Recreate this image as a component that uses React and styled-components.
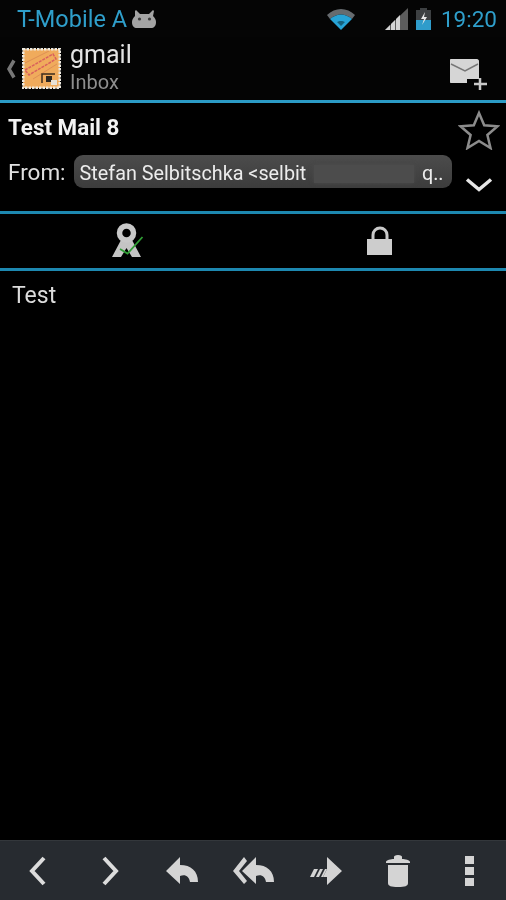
import styled, { createGlobalStyle } from "styled-components";

const GlobalStyle = createGlobalStyle`
  html, body {
    margin: 0;
    padding: 0;
    background: #000;
  }
  * {
    box-sizing: border-box;
  }
`;

function App() {
  return (
    <>
      <GlobalStyle />
      <Screen>
        <StatusBar>
          <Carrier>T-Mobile A</Carrier>
          <AndroidIcon />
          <StatusRight>
            <WifiIcon />
            <SignalIcon />
            <BatteryIcon />
            <Clock>19:20</Clock>
          </StatusRight>
        </StatusBar>

        <ActionBar>
          <BackIcon />
          <StampIcon />
          <TitleBlock>
            <AccountName>gmail</AccountName>
            <FolderName>Inbox</FolderName>
          </TitleBlock>
          <ComposeIcon />
        </ActionBar>
        <Divider />

        <HeaderBlock>
          <HeaderText>
            <Subject>Test Mail 8</Subject>
            <FromRow>
              <FromLabel>From:</FromLabel>
              <Chip>
                <span>Stefan Selbitschka &lt;selbit</span>
                <Smudge />
                <span>q..</span>
              </Chip>
            </FromRow>
          </HeaderText>
          <HeaderActions>
            <StarIcon />
            <ChevronIcon />
          </HeaderActions>
        </HeaderBlock>
        <Divider $dim />

        <SecurityRow>
          <SecurityCell>
            <CertIcon />
          </SecurityCell>
          <SecurityCell>
            <LockIcon />
          </SecurityCell>
        </SecurityRow>
        <Divider $dim />

        <Body>Test</Body>

        <BottomBar>
          <ToolCell>
            <PrevIcon />
          </ToolCell>
          <ToolCell>
            <NextIcon />
          </ToolCell>
          <ToolCell>
            <ReplyIcon />
          </ToolCell>
          <ToolCell>
            <ReplyAllIcon />
          </ToolCell>
          <ToolCell>
            <ForwardIcon />
          </ToolCell>
          <ToolCell>
            <TrashIcon />
          </ToolCell>
          <ToolCell>
            <MoreIcon />
          </ToolCell>
        </BottomBar>
      </Screen>
    </>
  );
}

const AndroidIcon = () => (
  <svg width="25" height="20" viewBox="0 0 25 20">
    <path
      d="M4 1l4 4h9l4-4 1 1-1 5c2 2 3 4 3 6 0 4-2 6-5 6H5c-3 0-5-2-5-6 0-2 1-4 3-6L3 2z"
      fill="#a3a3a3"
    />
    <circle cx="7.500" cy="10" r="1.600" fill="#3a3a3a" />
    <circle cx="17.500" cy="10" r="1.600" fill="#3a3a3a" />
  </svg>
);

const WifiIcon = () => (
  <svg width="28" height="22" viewBox="0 0 28 22">
    <path d="M0 7C8 -1 20 -1 28 7l-3 4C18 5 10 5 3 11z" fill="#666b6f" />
    <path d="M3 11C10 5 18 5 25 11L14 22z" fill="#27a3d6" />
    <path d="M10 14c2-1.500 6-1.500 8 0l-4 4z" fill="#14607c" />
  </svg>
);

const SignalIcon = () => (
  <svg width="24" height="22" viewBox="0 0 24 22">
    <path d="M0 22L23 0v22z" fill="#5c5c5c" />
    <path d="M0 22l5-5v5zM6 22v-6l4-4v10zM11 22V11l4-4v15z" fill="#d4d4d4" />
  </svg>
);

const BatteryIcon = () => (
  <svg width="15" height="22" viewBox="0 0 15 22">
    <path d="M4 0h7v2h4v20H0V2h4z" fill="#3d4042" />
    <rect y="12" width="15" height="10" fill="#2f9ccb" />
    <path d="M9 4l-4 7h3l-2 6 5-8H8z" fill="#e8e8e8" />
  </svg>
);

const BackIcon = () => (
  <svg width="10" height="20" viewBox="0 0 10 20">
    <path d="M8 1.500L3 10l5 8.500" fill="none" stroke="#777" strokeWidth="3.500" />
  </svg>
);

const StampIcon = () => (
  <svg width="39" height="41" viewBox="0 0 39 41">
    <rect x="1" y="1" width="37" height="39" fill="#f0ab5c" stroke="#eeeae0" strokeWidth="3" strokeDasharray="2.500 1" />
    <path d="M3 22L31 6l3 5L7 27z" fill="none" stroke="#d9605c" strokeWidth="1.500" strokeDasharray="3 1" />
    <path d="M3 15L27 3M11 31L35 16" stroke="#df8f55" strokeWidth="1" />
    <path d="M20 35v-9h13" fill="none" stroke="#3b2c1d" strokeWidth="1.500" />
    <rect x="24" y="28" width="6" height="6" fill="#2b2620" />
    <rect x="29" y="32" width="6" height="5" fill="#e8e2d6" />
  </svg>
);

const ComposeIcon = () => (
  <svg width="40" height="32" viewBox="0 0 40 32">
    <path d="M1 0h26c1 0 2 1 2 2v18H17v4H1c-.600 0-1-.400-1-1V1c0-.600.400-1 1-1z" fill="#d6d6d6" />
    <path d="M1 5l14 7 13-7" fill="none" stroke="#777" strokeWidth="1.500" />
    <path d="M30 19v12M24 25h13" stroke="#c9c9c9" strokeWidth="2.500" />
  </svg>
);

const StarIcon = () => (
  <svg width="42" height="40" viewBox="0 0 42 40">
    <path
      d="M21 3l5.200 12.200 13.300 1.100-10.100 8.700 3.100 13L21 31l-11.500 7 3.100-13L2.500 16.300l13.300-1.100z"
      fill="none"
      stroke="#8c8c8c"
      strokeWidth="2.500"
    />
  </svg>
);

const ChevronIcon = () => (
  <svg width="28" height="16" viewBox="0 0 28 16">
    <path d="M2 2.500l12 10 12-10" fill="none" stroke="#e6e6e6" strokeWidth="3.500" />
  </svg>
);

const CertIcon = () => (
  <svg width="34" height="36" viewBox="0 0 34 36">
    <path d="M11 17L2 34h9l5.500-9L22 34h9l-9-17z" fill="#c4c4c4" />
    <circle cx="16.500" cy="10" r="7" fill="none" stroke="#c8c8c8" strokeWidth="5.500" />
    <path d="M10 26l7.500 4.500L32.500 14" fill="none" stroke="#2f9e35" strokeWidth="1.800" />
  </svg>
);

const LockIcon = () => (
  <svg width="26" height="30" viewBox="0 0 26 30">
    <path d="M6 14V9a7 7 0 0 1 14 0v5" fill="none" stroke="#c9c9c9" strokeWidth="3" />
    <rect y="13" width="25" height="16" fill="#cdcdcd" />
  </svg>
);

const PrevIcon = () => (
  <svg width="20" height="32" viewBox="0 0 20 32">
    <path d="M16 3L4 16l12 13" fill="none" stroke="#dcdcdc" strokeWidth="4" />
  </svg>
);

const NextIcon = () => (
  <svg width="20" height="32" viewBox="0 0 20 32">
    <path d="M4 3l12 13L4 29" fill="none" stroke="#dcdcdc" strokeWidth="4" />
  </svg>
);

const ReplyIcon = () => (
  <svg width="34" height="30" viewBox="0 0 34 30">
    <path d="M15 1L1 15l14 13v-8c5-2 9 0 10 6h8c0-11-7-17-18-17z" fill="#d4d4d4" />
  </svg>
);

const ReplyAllIcon = () => (
  <svg width="42" height="30" viewBox="0 0 42 30">
    <path d="M11 1L0 15l11 13 3-3-8-10 8-10z" fill="#d4d4d4" />
    <path d="M23 1L9 15l14 13v-8c5-2 9 0 10 6h8c0-11-7-17-18-17z" fill="#d4d4d4" />
  </svg>
);

const ForwardIcon = () => (
  <svg width="34" height="30" viewBox="0 0 34 30">
    <path d="M18 1l15 14-15 14v-8h-4l4-8V1z" fill="#d4d4d4" />
    <path d="M1 21l4-8h4l-4 8zM7 21l4-8h3l-4 8zM12 21l4-8h2l-4 8z" fill="#d4d4d4" />
  </svg>
);

const TrashIcon = () => (
  <svg width="26" height="32" viewBox="0 0 26 32">
    <path d="M1 7c0-2 5-3 8-3V2c0-1 1-2 4-2s4 1 4 2v2c3 0 8 1 8 3v1H1z" fill="#d4d4d4" />
    <path d="M3 10h20v18c0 3-3 4-10 4S3 31 3 28z" fill="#d4d4d4" />
  </svg>
);

const MoreIcon = () => (
  <svg width="10" height="30" viewBox="0 0 10 30">
    <rect width="9" height="8" fill="#d4d4d4" />
    <rect y="11" width="9" height="8" fill="#d4d4d4" />
    <rect y="22" width="9" height="8" fill="#d4d4d4" />
  </svg>
);

const Screen = styled.div`
  width: 506px;
  height: 900px;
  background: #000;
  display: flex;
  flex-direction: column;
  font-family: Roboto, "Liberation Sans", sans-serif;
  overflow: hidden;
  filter: blur(0.4px);
`;

const StatusBar = styled.div`
  height: 37px;
  flex: none;
  display: flex;
  align-items: center;
  padding: 0 9px 0 17px;
  gap: 5px;
  background: #050505;
`;

const Carrier = styled.div`
  color: #2f9fcb;
  font-size: 23.500px;
`;

const StatusRight = styled.div`
  margin-left: auto;
  display: flex;
  align-items: center;

  > svg:nth-child(2) {
    margin-left: 30px;
  }
  > svg:nth-child(3) {
    margin-left: 7px;
  }
`;

const Clock = styled.div`
  color: #2f9fcb;
  font-size: 22.500px;
  margin-left: 10px;
`;

const ActionBar = styled.div`
  height: 63px;
  flex: none;
  display: flex;
  align-items: center;
  padding: 0 16px 0 6px;
  background: #040404;

  > svg:nth-child(2) {
    margin-left: 6px;
  }
  > svg:last-child {
    margin: 12px 0 0 auto;
  }
`;

const TitleBlock = styled.div`
  margin-left: 9px;
  display: flex;
  flex-direction: column;
`;

const AccountName = styled.div`
  color: #e4e4e4;
  font-size: 25px;
  line-height: 27px;
`;

const FolderName = styled.div`
  color: #8e8e8e;
  font-size: 20px;
  line-height: 28px;
`;

const Divider = styled.div`
  height: 3px;
  flex: none;
  background: ${(p) => (p.$dim ? "#1d88b0" : "#2b9bc6")};
`;

const HeaderBlock = styled.div`
  height: 108px;
  flex: none;
  display: flex;
  padding: 0 6px 0 8px;
`;

const HeaderText = styled.div`
  flex: 1;
  display: flex;
  flex-direction: column;
  min-width: 0;
`;

const Subject = styled.div`
  color: #f2f2f2;
  font-size: 22.400px;
  font-weight: 700;
  line-height: 25px;
  margin-top: 12px;
`;

const FromRow = styled.div`
  display: flex;
  align-items: center;
  margin-top: 15px;
  gap: 8px;
`;

const FromLabel = styled.div`
  color: #e0e0e0;
  font-size: 22.500px;
`;

const Chip = styled.div`
  width: 378px;
  height: 33px;
  flex: none;
  display: flex;
  align-items: center;
  padding: 4px 8px 0 6px;
  border-radius: 9px;
  background: linear-gradient(#4c4c4c, #3c3c3c);
  color: #ececec;
  font-size: 19.800px;
`;

const Smudge = styled.div`
  flex: 1;
  height: 18px;
  margin: 0 8px;
  background: #4c4c4c;
  box-shadow: 0 0 4px #4c4c4c;
`;

const HeaderActions = styled.div`
  width: 42px;
  flex: none;
  display: flex;
  flex-direction: column;
  align-items: center;
  padding-top: 7px;
  gap: 27px;
`;

const SecurityRow = styled.div`
  height: 54px;
  flex: none;
  display: flex;
`;

const SecurityCell = styled.div`
  flex: 1;
  display: flex;
  align-items: center;
  justify-content: center;
`;

const Body = styled.div`
  flex: 1;
  padding: 12px;
  color: #dcdcdc;
  font-size: 23px;
  line-height: 25px;
`;

const BottomBar = styled.div`
  height: 60px;
  flex: none;
  display: flex;
  align-items: center;
  padding-left: 2px;
  background: #272b30;
  border-top: 1px solid #33373b;
`;

const ToolCell = styled.div`
  flex: 1;
  display: flex;
  align-items: center;
  justify-content: center;
`;

export default App;
